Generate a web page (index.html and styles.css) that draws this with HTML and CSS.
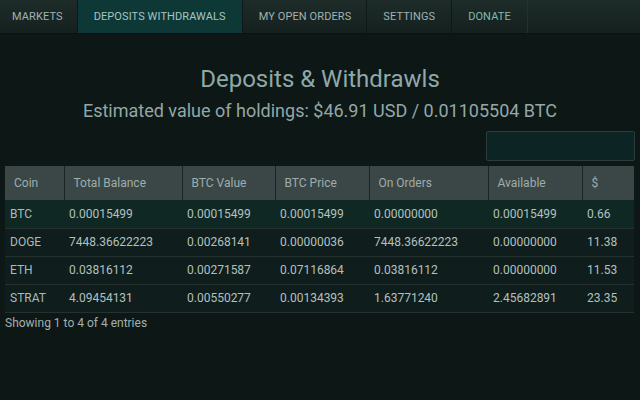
FILE: index.html
```html
<!DOCTYPE html>
<html lang="en">
<head>
  <meta charset="UTF-8">
  <title>Deposits &amp; Withdrawls</title>
  <link rel="stylesheet" href="styles.css">
</head>
<body>
  <nav class="tabs">
    <a class="tab">MARKETS</a>
    <a class="tab active">DEPOSITS WITHDRAWALS</a>
    <a class="tab">MY OPEN ORDERS</a>
    <a class="tab">SETTINGS</a>
    <a class="tab donate">DONATE</a>
  </nav>

  <div class="page">
    <h1>Deposits &amp; Withdrawls</h1>
    <h2>Estimated value of holdings: $46.91 USD / 0.01105504 BTC</h2>

    <div class="search-row"><input type="search" class="search"></div>

    <table class="balances">
      <colgroup>
        <col style="width:59px"><col style="width:118px"><col style="width:93px">
        <col style="width:94px"><col style="width:119px"><col style="width:94px"><col>
      </colgroup>
      <thead>
        <tr><th>Coin</th><th>Total Balance</th><th>BTC Value</th><th>BTC Price</th><th>On Orders</th><th>Available</th><th>$</th></tr>
      </thead>
      <tbody>
        <tr><td>BTC</td><td>0.00015499</td><td>0.00015499</td><td>0.00015499</td><td>0.00000000</td><td>0.00015499</td><td>0.66</td></tr>
        <tr><td>DOGE</td><td>7448.36622223</td><td>0.00268141</td><td>0.00000036</td><td>7448.36622223</td><td>0.00000000</td><td>11.38</td></tr>
        <tr><td>ETH</td><td>0.03816112</td><td>0.00271587</td><td>0.07116864</td><td>0.03816112</td><td>0.00000000</td><td>11.53</td></tr>
        <tr><td>STRAT</td><td>4.09454131</td><td>0.00550277</td><td>0.00134393</td><td>1.63771240</td><td>2.45682891</td><td>23.35</td></tr>
      </tbody>
    </table>
    <div class="info">Showing 1 to 4 of 4 entries</div>
  </div>
</body>
</html>
```

FILE: styles.css
```css
* { margin:0; padding:0; box-sizing:border-box }
body {
  background:#0d1716; color:#b4c0bf;
  font-family:Roboto,'Liberation Sans',sans-serif;
  width:640px; height:400px; overflow:hidden;
}
.tabs {
  display:flex; height:34px;
  background:linear-gradient(#1d2b29,#15211f);
  border-bottom:1px solid #0a1211;
}
.tab {
  display:flex; align-items:center; padding:0 14px 0 12px;
  font-size:11px; color:#9fb3b1; letter-spacing:0.1px;
  border-right:1px solid #0f1817;
}
.tab.active { background:#0d3836; color:#a9c3c1; padding:0 16px; }
.tab:nth-child(3) { padding:0 15px 0 16px; }
.tab:nth-child(4) { padding:0 16px; }
.tab.donate { color:#7fbcae; padding:0 16px; border-right:1px solid #24312f; }
.page { padding:30px 5px 0 5px; }
h1 { text-align:center; font-size:24px; font-weight:400; color:#8fa8a8; line-height:30px; }
h2 { text-align:center; font-size:18px; font-weight:400; color:#93a8a6; line-height:24px; margin-top:5px; }
.search-row { display:flex; justify-content:flex-end; margin-top:8px; }
.search {
  width:149px; height:30px; background:#0c2524;
  border:1px solid #2c3c3b; border-radius:2px; outline:none;
}
.balances {
  width:629px; margin-top:5px; border-collapse:collapse; table-layout:fixed;
  font-size:12px;
}
.balances th {
  height:34px; background:#3a4746; color:#9fadac; font-weight:400;
  text-align:left; padding:0 9px; border-left:1px solid #1a2423;
}
.balances th:first-child { border-left:none; }
.balances td {
  height:28px; padding:0 5px; color:#b4c0bf;
  border-bottom:1px solid #24312f; white-space:nowrap;
}
.balances tbody tr { background:#0f1d1c; }
.balances tbody tr:first-child { background:#0f2824; }
.balances td:first-child { color:#a9bbbb; }
.info { font-size:12px; color:#a2b0af; margin-top:3px; line-height:14px; }
```
